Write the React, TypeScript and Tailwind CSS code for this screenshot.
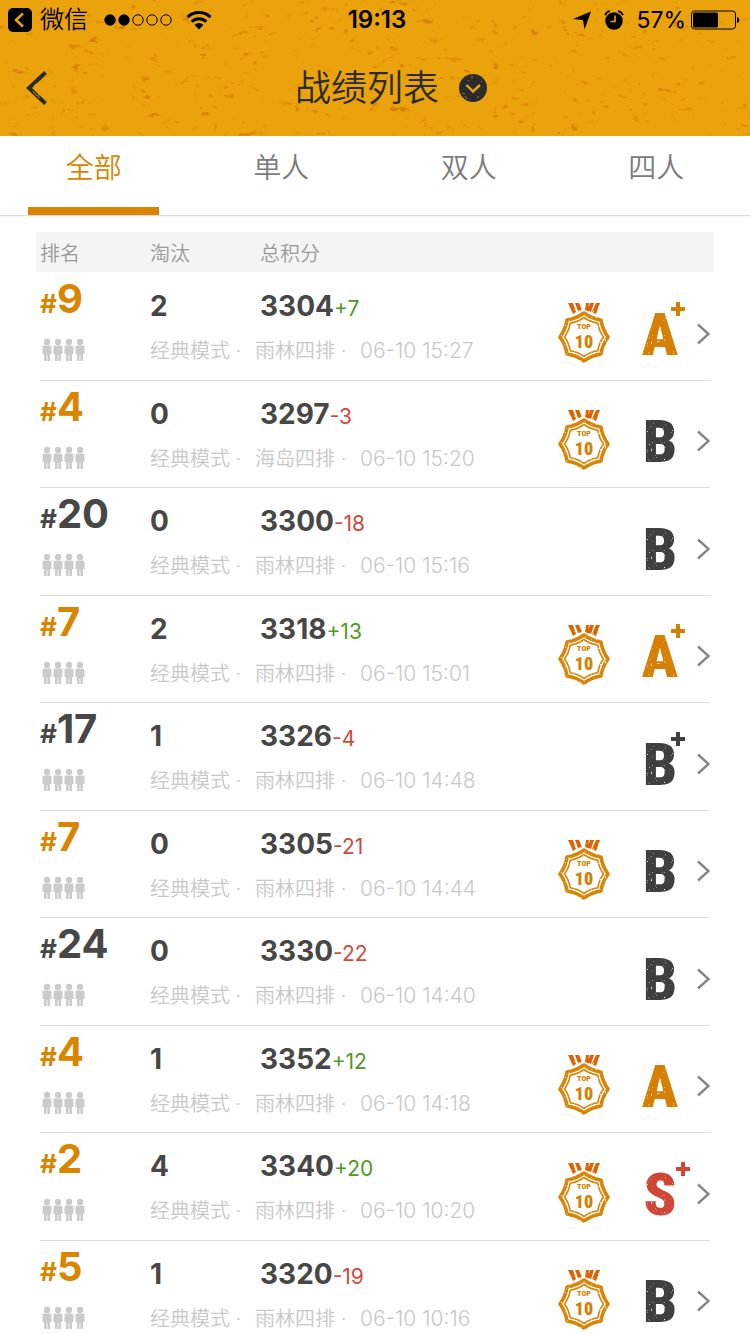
import { useState } from "react";

type Grade = { letter: "A" | "B" | "S"; plus?: boolean };

type Match = {
  rank: number;
  kills: number;
  score: number;
  delta: number;
  map: string;
  time: string;
  grade: Grade;
};

const tabs = ["全部", "单人", "双人", "四人"];

const matches: Match[] = [
  { rank: 9, kills: 2, score: 3304, delta: 7, map: "雨林四排", time: "06-10 15:27", grade: { letter: "A", plus: true } },
  { rank: 4, kills: 0, score: 3297, delta: -3, map: "海岛四排", time: "06-10 15:20", grade: { letter: "B" } },
  { rank: 20, kills: 0, score: 3300, delta: -18, map: "雨林四排", time: "06-10 15:16", grade: { letter: "B" } },
  { rank: 7, kills: 2, score: 3318, delta: 13, map: "雨林四排", time: "06-10 15:01", grade: { letter: "A", plus: true } },
  { rank: 17, kills: 1, score: 3326, delta: -4, map: "雨林四排", time: "06-10 14:48", grade: { letter: "B", plus: true } },
  { rank: 7, kills: 0, score: 3305, delta: -21, map: "雨林四排", time: "06-10 14:44", grade: { letter: "B" } },
  { rank: 24, kills: 0, score: 3330, delta: -22, map: "雨林四排", time: "06-10 14:40", grade: { letter: "B" } },
  { rank: 4, kills: 1, score: 3352, delta: 12, map: "雨林四排", time: "06-10 14:18", grade: { letter: "A" } },
  { rank: 2, kills: 4, score: 3340, delta: 20, map: "雨林四排", time: "06-10 10:20", grade: { letter: "S", plus: true } },
  { rank: 5, kills: 1, score: 3320, delta: -19, map: "雨林四排", time: "06-10 10:16", grade: { letter: "B" } },
];

const gradeColors = { A: "#d67f05", B: "#3f3f3f", S: "#cf4636" };

// shared filters: paint grain for the header, worn ink for badges and grades
function Filters() {
  return (
    <svg className="absolute h-0 w-0" aria-hidden="true">
      <filter id="grain" x="0" y="0" width="100%" height="100%" colorInterpolationFilters="sRGB">
        <feTurbulence type="fractalNoise" baseFrequency="0.1 0.16" numOctaves="5" seed="8" result="fine" />
        <feColorMatrix in="fine" values="0 0 0 0 0.85  0 0 0 0 0.5  0 0 0 0 0  8 0 0 0 -5.1" result="specks" />
        <feTurbulence type="fractalNoise" baseFrequency="0.03 0.05" numOctaves="3" seed="5" result="broad" />
        <feColorMatrix in="broad" values="0 0 0 0 1  0 0 0 0 1  0 0 0 0 1  0 5 0 0 -2.2" result="patches" />
        <feComposite in="specks" in2="patches" operator="in" />
      </filter>
      <filter id="worn" x="-5%" y="-5%" width="110%" height="110%" colorInterpolationFilters="sRGB">
        <feTurbulence type="fractalNoise" baseFrequency="0.45" numOctaves="2" seed="4" result="noise" />
        <feColorMatrix in="noise" values="0 0 0 0 0  0 0 0 0 0  0 0 0 0 0  -7 0 0 0 5.8" result="holes" />
        <feComposite in="SourceGraphic" in2="holes" operator="in" />
      </filter>
    </svg>
  );
}

function StatusBar() {
  return (
    <div className="flex h-10 items-center px-2 text-2xl text-black">
      <div className="flex flex-1 items-center">
        <svg width="24" height="24" viewBox="0 0 24 24" aria-hidden="true">
          <rect width="24" height="24" rx="5" />
          <path d="M15 5.500L8 12l7 6.500" fill="none" stroke="#eaa30c" strokeWidth="2.500" />
        </svg>
        <span className="ml-2 font-[350]">微信</span>
        <svg className="ml-4" width="70" height="12" viewBox="0 0 70 12" aria-hidden="true">
          {[0, 1, 2, 3, 4].map((i) => (
            <circle key={i} cx={6 + i * 14} cy="6" r="5.200" fill={i < 2 ? "#000" : "none"} stroke="#000" />
          ))}
        </svg>
        <svg className="ml-3" width="26" height="20" viewBox="0 0 26 20" fill="none" stroke="#000" strokeWidth="3" aria-hidden="true">
          <path d="M1.500 7.200a16.500 16.500 0 0 1 23 0M5.700 11.600a10.500 10.500 0 0 1 14.600 0" />
          <path d="M13 19.500l-4.400-4.600a6.300 6.300 0 0 1 8.800 0z" fill="#000" stroke="none" />
        </svg>
      </div>
      <span className="pl-1 font-semibold">19:13</span>
      <div className="flex flex-1 items-center justify-end">
        <svg width="20" height="20" viewBox="0 0 20 20" aria-hidden="true">
          <path d="M19 1.500L12.500 19.500l-1.500-9.500L1 9z" />
        </svg>
        <svg className="ml-3" width="20" height="20" viewBox="0 0 20 20" aria-hidden="true">
          <circle cx="10" cy="11" r="8.700" />
          <path d="M1.200 5.200A6 6 0 0 1 6 1.200M18.800 5.200A6 6 0 0 0 14 1.200" stroke="#000" strokeWidth="1.800" fill="none" />
          <path d="M11 5.500v6H6.500" stroke="#eaa30c" strokeWidth="1.600" fill="none" />
        </svg>
        <span className="ml-3 text-[23px]">57%</span>
        <svg className="ml-1" width="52" height="20" viewBox="0 0 52 20" aria-hidden="true">
          <rect x="1.500" y="1" width="44" height="18" rx="3" fill="none" stroke="#000" />
          <rect x="3" y="2.500" width="25" height="15" rx="1.500" />
          <path d="M47 7c3 0.500 3 5.500 0 6z" />
        </svg>
      </div>
    </div>
  );
}

function Header() {
  return (
    <header className="relative h-34 shrink-0 bg-[#eaa30c]">
      <svg className="absolute inset-0 h-full w-full" aria-hidden="true">
        <rect width="100%" height="100%" filter="url(#grain)" />
      </svg>
      <div className="relative">
        <StatusBar />
        <div className="grid h-24 grid-cols-[80px_1fr_80px] items-center">
          <button type="button" aria-label="返回" className="flex h-full items-center pl-6">
            <svg width="24" height="36" viewBox="0 0 24 36" fill="none" stroke="#2b2b2b" strokeWidth="4" aria-hidden="true">
              <path d="M21.500 2.500L5 18l16.500 15.500" />
              <path d="M13 13l-3 3M9 21l4 5M14 24l1 4" stroke="#eaa30c" strokeWidth="0.800" />
            </svg>
          </button>
          <button type="button" className="flex items-center justify-center gap-5 pl-8 text-4xl font-[350] text-[#2b2b2b]">
            战绩列表
            <svg width="28" height="28" viewBox="0 0 28 28" aria-hidden="true">
              <circle cx="14" cy="14" r="14" fill="#2b2b2b" />
              <path d="M7.500 11l6.500 6.500L21 11" fill="none" stroke="#eaa30c" strokeWidth="2.400" />
              <path d="M13 1.500v3M18 24l2-2M3 19l3 1M6 22l2 3M22 7l1 1M9 6l1 1" stroke="#b58014" strokeWidth="0.900" />
            </svg>
          </button>
        </div>
      </div>
    </header>
  );
}

function Squad() {
  return (
    <svg width="44" height="24" viewBox="0 0 44 24" fill="#cbcbcb" role="img" aria-label="四人小队">
      {[0, 11, 22, 33].map((x) => (
        <g key={x} transform={`translate(${x} 0)`}>
          <circle cx="5" cy="4" r="3.200" />
          <path d="M2 7.500h6a1.500 1.500 0 0 1 1.500 1.500v7H8v7H5.400v-6h-0.800v6H2v-7H0.500V9A1.500 1.500 0 0 1 2 7.500z" />
        </g>
      ))}
    </svg>
  );
}

// eight-pointed ring with slightly hollow sides
function ring(radius: number) {
  const point = (i: number, r: number) => {
    const a = (i * Math.PI) / 8;
    return `${(26 + r * Math.sin(a)).toFixed(2)} ${(35 - r * Math.cos(a)).toFixed(2)}`;
  };
  let d = `M${point(0, radius)}`;
  for (let i = 1; i < 16; i += 2) d += `Q${point(i, radius * 0.83)} ${point(i + 1, radius)}`;
  return d + "Z";
}

function Medal() {
  return (
    <svg width="52" height="62" viewBox="0 0 52 62" role="img" aria-label="TOP 10">
      <g filter="url(#worn)">
        <path d="M10 1h5l3 9-3 2zM17 1h4l3 7-4 1zM31 1h-3l-1 7 3 1zM36 1h-4l-3 8 4 1zM42 1h-4l-4 9 4 2z" fill="#db6400" />
        <path d={ring(24)} fill="none" stroke="#d88406" strokeWidth="3.600" strokeLinejoin="round" />
        <path d={ring(19.500)} fill="none" stroke="#d88406" strokeWidth="1.600" />
      </g>
      <g className="fill-[#d67f05] font-[Roboto_Condensed,Liberation_Sans_Narrow,sans-serif] font-black" textAnchor="middle">
        <text x="26" y="27" fontSize="8">TOP</text>
        <text x="26" y="46" fontSize="18">10</text>
      </g>
    </svg>
  );
}

function GradeMark({ letter, plus }: Grade) {
  return (
    <svg width="50" height="60" viewBox="0 0 50 60" fill={gradeColors[letter]} className="overflow-visible">
      <text x="20" y="54" textAnchor="middle" fontSize="60" filter="url(#worn)" className="font-[Roboto_Condensed,Liberation_Sans_Narrow,sans-serif] font-black">
        {letter}
      </text>
      {plus && <path d={letter === "S" ? "M36 6h5V1h4v5h5v4h-5v5h-4v-5h-5z" : "M31 6h5V1h4v5h5v4h-5v5h-4v-5h-5z"} />}
    </svg>
  );
}

function MatchRow({ match }: { match: Match }) {
  const top = match.rank <= 10;
  return (
    <tr className="grid grid-cols-[110px_110px_1fr_90px_50px_20px] grid-rows-[56px_1fr] border-b border-[#dcdcdc] odd:h-[108px] even:h-[107px]">
      <td className={`row-span-2 flex flex-col font-bold ${top ? "text-[#d88500]" : "text-[#474747]"}`}>
        <div className="h-[65px] text-[40px] leading-[52px]">
          <span className="text-[26px]">#</span>
          {match.rank}
        </div>
        <div className="pl-0.5">
          <Squad />
        </div>
      </td>
      <td className="text-[28px] leading-[66px] font-bold text-[#474747]">{match.kills}</td>
      <td className="text-[28px] leading-[66px] font-bold whitespace-nowrap text-[#474747]">
        {match.score}
        <span className={`text-[21px] font-normal ${match.delta > 0 ? "text-[#4d9a26]" : "text-[#cf4a3c]"}`}>
          {match.delta > 0 ? `+${match.delta}` : match.delta}
        </span>
      </td>
      <td className="col-start-4 row-span-2 row-start-1 flex items-center pt-3 pl-2">{top && <Medal />}</td>
      <td className="col-start-5 row-span-2 row-start-1 flex items-center pt-2">
        <GradeMark {...match.grade} />
      </td>
      <td className="col-start-6 row-span-2 row-start-1">
        <a href="#detail" aria-label="查看详情" className="flex h-full items-center justify-end pt-3.5">
          <svg width="14" height="22" viewBox="0 0 14 22" fill="none" stroke="#858585" strokeWidth="2.400" aria-hidden="true">
            <path d="M2 1.500L12.500 11 2 20.500" />
          </svg>
        </a>
      </td>
      <td className="col-start-2 col-end-5 row-start-2 flex pt-2 text-xl leading-7 font-[350] whitespace-nowrap text-[#c8c8c8]">
        <span className="w-[105px]">经典模式 ·</span>
        <span className="w-[105px]">{match.map} ·</span>
        <span className="text-[21px]">{match.time}</span>
      </td>
    </tr>
  );
}

export default function App() {
  const [active, setActive] = useState(0);

  return (
    <div className="flex h-screen flex-col overflow-hidden bg-white font-[Inter,Noto_Sans_CJK_SC,sans-serif]">
      <Filters />
      <Header />
      <nav className="relative flex h-20 shrink-0 border-b border-[#d9d9d9] shadow-xs">
        {tabs.map((tab, i) => (
          <button
            key={tab}
            type="button"
            onClick={() => setActive(i)}
            className={`flex flex-1 flex-col items-center justify-between pt-3 text-[28px] leading-10 font-[350] ${i === active ? "text-[#d88500]" : "text-[#7b7b7b]"}`}
          >
            {tab}
            <span className={`h-2 w-[131px] ${i === active ? "bg-[#d88500]" : ""}`} />
          </button>
        ))}
      </nav>
      <main className="flex-1 overflow-y-auto px-9 pt-4 [scrollbar-width:none]">
        <table className="block">
          <thead className="block bg-[#f4f4f4]">
            <tr className="grid h-10 grid-cols-[110px_110px_1fr] px-1 pt-1 text-left text-xl leading-9 text-[#999]">
              <th className="font-[350]">排名</th>
              <th className="font-[350]">淘汰</th>
              <th className="font-[350]">总积分</th>
            </tr>
          </thead>
          <tbody className="block px-1 pt-px">
            {matches.map((match) => (
              <MatchRow key={match.time} match={match} />
            ))}
          </tbody>
        </table>
      </main>
    </div>
  );
}
